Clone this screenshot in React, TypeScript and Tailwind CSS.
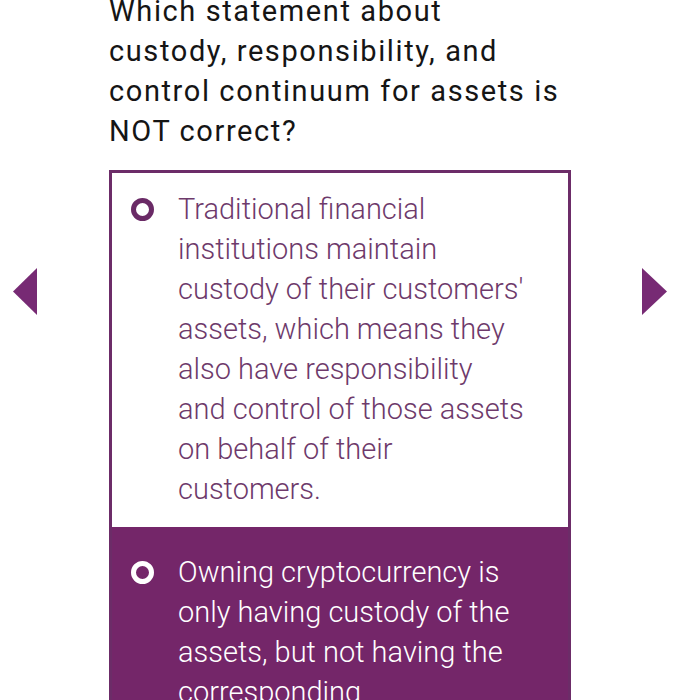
import React from 'react'

const options = [
  {
    id: 'a',
    text: "Traditional financial institutions maintain custody of their customers' assets, which means they also have responsibility and control of those assets on behalf of their customers.",
    selected: false,
  },
  {
    id: 'b',
    text: 'Owning cryptocurrency is only having custody of the assets, but not having the corresponding responsibility and control of them.',
    selected: true,
  },
]

function Radio({ inverted }: { inverted: boolean }) {
  return (
    <span
      className={
        inverted
          ? 'mt-[9px] block h-[23px] w-[23px] shrink-0 rounded-full border-[5px] border-white bg-[#742669]'
          : 'mt-[9px] block h-[23px] w-[23px] shrink-0 rounded-full border-[5px] border-[#6a2a66] bg-white'
      }
    />
  )
}

export default function App() {
  return (
    <div className="h-[700px] w-[674px] overflow-hidden bg-white font-['Roboto',sans-serif]">
      <h1 className="-mt-[9px] ml-[109px] w-[452px] text-[29px] font-normal leading-[40px] tracking-[1.6px] text-[#151515]">
        Which statement about custody, responsibility, and control continuum for assets is NOT correct?
      </h1>

      <div className="mt-[19px] flex items-start">
        {/* Previous */}
        <div className="flex w-[109px] shrink-0 pl-[13px] pt-[98px]">
          <svg width="24" height="47" viewBox="0 0 24 47">
            <path d="M24 0 L0 23.5 L24 47 Z" fill="#772a74" />
          </svg>
        </div>

        {/* Choices */}
        <div className="w-[462px] shrink-0 border-[3px] border-[#6c2c68]">
          {options.map((opt) => (
            <div
              key={opt.id}
              className={
                opt.selected
                  ? 'flex gap-[24px] bg-[#742669] pb-[18px] pl-[19px] pt-[25px] text-white'
                  : 'flex gap-[24px] bg-white pb-[18px] pl-[19px] pt-[16px] text-[#6e3a6b]'
              }
            >
              <Radio inverted={opt.selected} />
              <p className="w-[347px] text-[29px] font-light leading-[40px]">{opt.text}</p>
            </div>
          ))}
        </div>

        {/* Next */}
        <div className="flex flex-1 pl-[71px] pt-[98px]">
          <svg width="25" height="47" viewBox="0 0 25 47">
            <path d="M0 0 L25 23.5 L0 47 Z" fill="#772a74" />
          </svg>
        </div>
      </div>
    </div>
  )
}
